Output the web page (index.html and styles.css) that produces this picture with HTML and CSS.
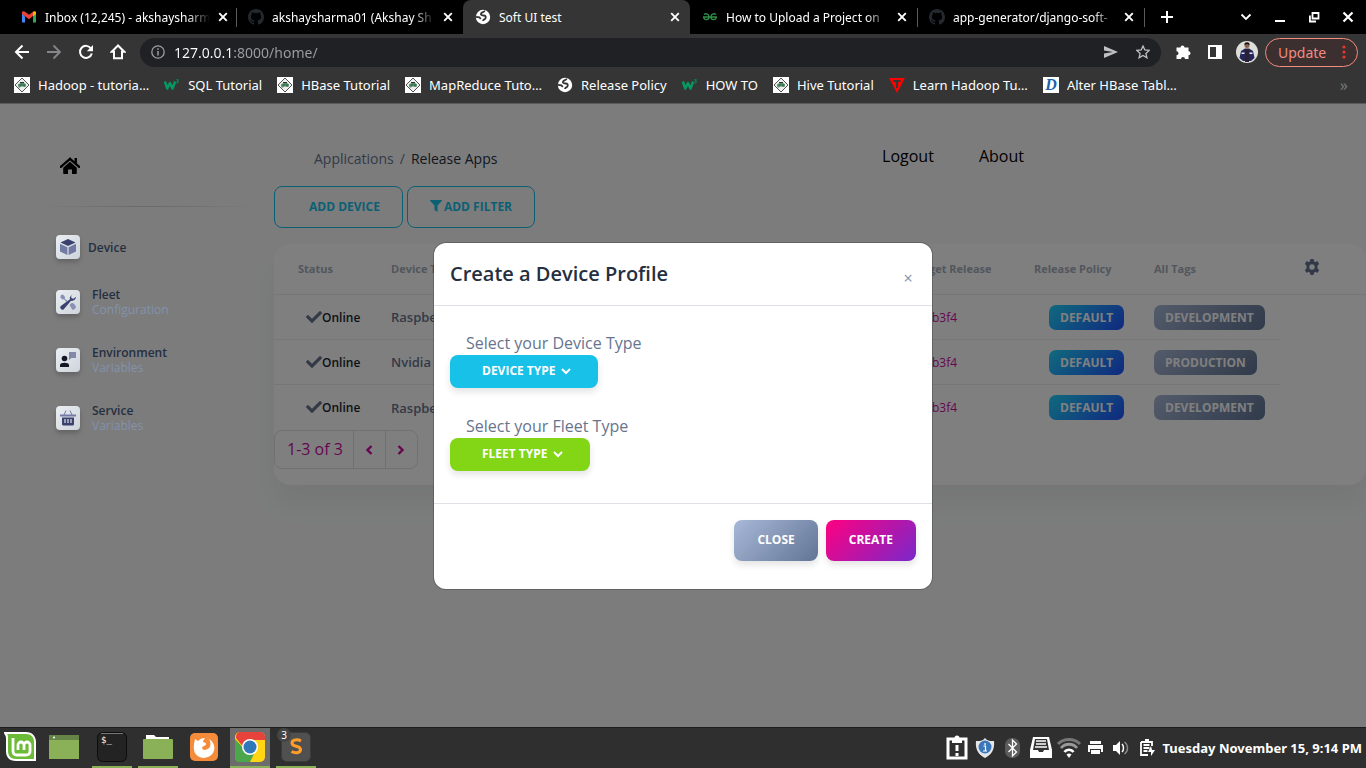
FILE: index.html
```html
<!DOCTYPE html>
<html lang="en">
<head>
<meta charset="utf-8">
<title>Soft UI test</title>
<link rel="stylesheet" href="styles.css">
</head>
<body>
<svg class="defs" aria-hidden="true">
  <symbol id="close" viewBox="0 0 10 10"><path d="M1.2 1.2l7.6 7.6M8.8 1.2L1.2 8.8" fill="none" stroke="#fff" stroke-width="1.9"/></symbol>
  <symbol id="github" viewBox="0 0 16 16"><path fill="#24292f" d="M8 0C3.58 0 0 3.58 0 8c0 3.54 2.29 6.53 5.47 7.59.4.07.55-.17.55-.38v-1.49c-2.01.37-2.53-.49-2.69-.94-.09-.23-.48-.94-.82-1.13-.28-.15-.68-.52-.01-.53.63-.01 1.08.58 1.23.82.72 1.21 1.87.87 2.33.66.07-.52.28-.87.51-1.07-1.78-.2-3.64-.89-3.64-3.95 0-.87.31-1.59.82-2.15-.08-.2-.36-1.02.08-2.12 0 0 .67-.21 2.2.82a7.5 7.5 0 0 1 4 0c1.53-1.04 2.2-.82 2.2-.82.44 1.1.16 1.92.08 2.12.51.56.82 1.27.82 2.15 0 3.07-1.87 3.75-3.65 3.95.29.25.54.73.54 1.48v2.2c0 .21.15.46.55.38A8 8 0 0 0 16 8c0-4.42-3.58-8-8-8z"/></symbol>
  <symbol id="globe" viewBox="0 0 16 16"><circle cx="8" cy="8" r="7.200" fill="#fff"/><path d="M9.500 1.500C10 3.200 6.800 3 6 4.600c-.6 1.400 1 1.900 2.600 1.900 2 0 2.600 1.300 1.900 2.800-.6 1.300-2.400 1-2.500 2.700M1 7.800l3.400.6 1.400 1.600" fill="none" stroke="#353535" stroke-width="1.800"/></symbol>
  <symbol id="elephant" viewBox="0 0 16 16"><path fill="#fff" d="M0 0h16v16H0z"/><path d="M8 1l7 7-7 7-7-7z" fill="#eee" stroke="#555" stroke-width="1"/><path d="M4 7.500c1-1.500 6-2.500 8 0l-.5 2.500H10l-1-.5H7l-1 1H4.500z" fill="#4a8a63"/><path d="M6 5.500h4M6.500 8h1M9.500 8h1" stroke="#333" stroke-width="1"/></symbol>
  <symbol id="w3" viewBox="0 0 16 16"><path d="M.8 4.500l2.500 7L6 6l2.500 5.500 2.700-7" fill="none" stroke="#059862" stroke-width="2.500" stroke-linejoin="round"/><path d="M12.300 2.800h2.200l-1.200 1.500c2 .2 1.500 2.200-1 1.500" fill="none" stroke="#059862" stroke-width=".9"/></symbol>
  <symbol id="check" viewBox="0 0 512 512"><path d="M174 439L7 272a26 26 0 0 1 0-36l37-36a26 26 0 0 1 36 0l112 112L432 73a26 26 0 0 1 36 0l37 36a26 26 0 0 1 0 36L210 439a26 26 0 0 1-36 0z" fill="#67748e"/></symbol>
</svg>

<header class="browser">
  <div class="tabs">
    <div class="tab">
      <svg class="fav" viewBox="0 0 16 16"><path d="M1 4v9.500h3V7.500z" fill="#4285f4"/><path d="M15 4v9.500h-3V7.500z" fill="#34a853"/><path d="M1 3.500C1 2 3 1.800 4 2.700l4 3 4-3V7l-4 3.200L1 5z" fill="#ea4335"/><path d="M12 2.700c1-.9 3-.7 3 .8V5l-3 2.500z" fill="#fbbc04"/></svg>
      <span class="name fade">Inbox (12,245) - akshaysharm</span>
      <button class="x" aria-label="Close tab"><svg><use href="#close"/></svg></button>
    </div>
    <div class="tab line">
      <svg class="fav"><use href="#github"/></svg>
      <span class="name fade">akshaysharma01 (Akshay Sh</span>
      <button class="x" aria-label="Close tab"><svg><use href="#close"/></svg></button>
    </div>
    <div class="tab active">
      <svg class="fav"><use href="#globe"/></svg>
      <span class="name">Soft UI test</span>
      <button class="x" aria-label="Close tab"><svg><use href="#close"/></svg></button>
    </div>
    <div class="tab">
      <svg class="fav" viewBox="0 0 16 16"><path d="M1 8h14M2 5.500c2-1.500 5-.5 5 2.500 0 3.500-5 3.500-5.300 0M14 5.500c-2-1.500-5-.5-5 2.500 0 3.500 5 3.500 5.300 0" fill="none" stroke="#2f8d46" stroke-width="1.400"/></svg>
      <span class="name fade">How to Upload a Project on</span>
      <button class="x" aria-label="Close tab"><svg><use href="#close"/></svg></button>
    </div>
    <div class="tab line">
      <svg class="fav"><use href="#github"/></svg>
      <span class="name fade">app-generator/django-soft-</span>
      <button class="x" aria-label="Close tab"><svg><use href="#close"/></svg></button>
    </div>
    <div class="tabs-end line">
      <button class="plus" aria-label="New tab"><svg viewBox="0 0 12 12"><path d="M6 0v12M0 6h12" stroke="#fff" stroke-width="2"/></svg></button>
      <div class="window-buttons">
        <button aria-label="Search tabs"><svg viewBox="0 0 12 12"><path d="M1.500 3.500L6 8l4.500-4.500" fill="none" stroke="#fff" stroke-width="1.800"/></svg></button>
        <button aria-label="Minimize"><svg viewBox="0 0 12 12"><path d="M1 10h10" stroke="#fff" stroke-width="2"/></svg></button>
        <button aria-label="Restore"><svg viewBox="0 0 12 12"><path d="M4.500 2h6v5.500h-6zM1.900 4.500v6H8" fill="none" stroke="#fff" stroke-width="1.800"/></svg></button>
        <button aria-label="Close window"><svg viewBox="0 0 12 12"><path d="M1.500 1.500l9 9M10.500 1.500l-9 9" stroke="#fff" stroke-width="2.200"/></svg></button>
      </div>
    </div>
  </div>
  <div class="toolbar">
    <button class="tool" aria-label="Back"><svg viewBox="0 0 16 16"><path d="M15 8H2M8.500 1.500L2 8l6.500 6.500" fill="none" stroke="#fff" stroke-width="2"/></svg></button>
    <button class="tool" aria-label="Forward"><svg viewBox="0 0 16 16"><path d="M1 8h13M7.500 1.500L14 8l-6.500 6.500" fill="none" stroke="#85868a" stroke-width="1.800"/></svg></button>
    <button class="tool" aria-label="Reload"><svg viewBox="0 0 16 16"><path d="M13 4.500A6 6 0 1 0 13.800 9.500" fill="none" stroke="#fff" stroke-width="2"/><path d="M15 1v6.200H8.800z" fill="#fff"/></svg></button>
    <button class="tool" aria-label="Home"><svg viewBox="0 0 16 16"><path d="M8 1.500L1.800 7.700H4v6.500h8V7.700h2.200z" fill="none" stroke="#fff" stroke-width="2"/></svg></button>
    <form class="omnibox">
      <svg viewBox="0 0 14 14"><circle cx="7" cy="7" r="6.200" fill="none" stroke="#9aa0a6" stroke-width="1.300"/><path d="M7 6v4.500M7 3.300v1.400" stroke="#9aa0a6" stroke-width="1.500"/></svg>
      <input type="text" aria-label="Address" value="127.0.0.1:8000/home/">
      <svg viewBox="0 0 14 14"><path d="M0 1l14 6-14 6V8.500L9 7 0 5.500z" fill="#bdc1c6"/></svg>
      <svg viewBox="0 0 14 14"><path d="M7 1l1.800 4 4.400.4-3.300 3 1 4.400L7 10.500l-3.900 2.300 1-4.400-3.300-3L5.200 5z" fill="none" stroke="#bdc1c6" stroke-width="1.300"/></svg>
    </form>
    <button class="tool" aria-label="Extensions"><svg viewBox="0 0 16 16"><path d="M1.500 3.500h4a2 2 0 1 1 4 0h4V7.200a2 2 0 1 1 0 4V15H10a2 2 0 0 0-4 0H1.500v-3.800a2 2 0 0 0 0-4z" fill="#fff"/></svg></button>
    <button class="tool" aria-label="Side panel"><svg viewBox="0 0 16 16"><path d="M2 2h12v12H2z" fill="none" stroke="#fff" stroke-width="2"/><path d="M9 2h5v12H9z" fill="#fff"/></svg></button>
    <button class="tool avatar" aria-label="Profile"><svg viewBox="0 0 22 22"><circle cx="11" cy="11" r="11" fill="#dedfd9"/><circle cx="11" cy="4.500" r="2.500" fill="#8a6250"/><path d="M8.300 4a2.700 2.700 0 0 1 5.400 0L11 3z" fill="#111"/><path d="M5 10l4-2.500h4l4 2.500 1.500 7-3.500 3H7l-3.500-3z" fill="#24265a"/><path d="M5.500 11.500h3v1.500h-3zM13.500 11.500h3v1.500h-3z" fill="#dfe4ff"/><path d="M9 8h4v13H9z" fill="#2b1f33"/></svg></button>
    <button class="update"><span>Update</span><svg viewBox="0 0 4 14"><circle cx="2" cy="2" r="1.600"/><circle cx="2" cy="7" r="1.600"/><circle cx="2" cy="12" r="1.600"/></svg></button>
  </div>
  <nav class="bookmarks">
    <a href="#"><svg><use href="#elephant"/></svg>Hadoop - tutoria…</a>
    <a href="#"><svg><use href="#w3"/></svg>SQL Tutorial</a>
    <a href="#"><svg><use href="#elephant"/></svg>HBase Tutorial</a>
    <a href="#"><svg><use href="#elephant"/></svg>MapReduce Tuto…</a>
    <a href="#"><svg><use href="#globe"/></svg>Release Policy</a>
    <a href="#"><svg><use href="#w3"/></svg>HOW TO</a>
    <a href="#"><svg><use href="#elephant"/></svg>Hive Tutorial</a>
    <a href="#"><svg viewBox="0 0 16 16"><path d="M0 1h16L8 16z" fill="#f00"/><path d="M4.500 4h7M8 4v7" stroke="#353535" stroke-width="2"/></svg>Learn Hadoop Tu…</a>
    <a href="#"><span class="d-icon">D</span>Alter HBase Tabl…</a>
    <button class="more" aria-label="More bookmarks">»</button>
  </nav>
</header>

<div class="page">
  <aside class="sidebar">
    <a href="#" class="home" aria-label="Home"><svg viewBox="0 0 20 16"><path d="M10 .8L.8 8.800M10 .8l9.200 8" fill="none" stroke="#000" stroke-width="2.300" stroke-linecap="round"/><path d="M14.500 0h2.500v6l-2.500-2zM10 3.800l6.800 6V15c0 .6-.4 1-1 1H12v-4.500H8V16H4.200c-.6 0-1-.4-1-1V9.800z"/></svg></a>
    <hr>
    <nav class="menu">
      <a href="#" class="single"><span class="box"><svg viewBox="0 0 16 16"><path d="M8 0l7.500 3.500L8 7 .5 3.500z" fill="#3a416f"/><path d="M0 4.800l7.400 3.400V16L0 12.500zM16 4.800L8.600 8.200V16l7.400-3.500z" fill="#727aa3"/></svg></span><span class="text"><b>Device</b></span></a>
      <a href="#"><span class="box"><svg viewBox="0 0 16 16"><path d="M1 1l2-.5L5 3l-.3 1.500L7.500 7 6.500 8 4 5.200l-1.500.3L.3 3.500zM9.500 11l2-2c1-.3 2 .3 2.700 1l1.500 2c.8 2-1.500 4.500-3.500 3.500z" fill="#8a90b4"/><path d="M12.500.3L10 3c-.3 1-.2 1.600 0 2.200L.8 12c-1.800 1.800 1 5 3 3.200L11 6.800c2 .5 5-1 5-4l-2.500 2-2-.5-.3-2z" fill="#3a416f"/></svg></span><span class="text"><b>Fleet</b><small>Configuration</small></span></a>
      <a href="#"><span class="box"><svg viewBox="0 0 16 16"><path d="M9 0h7v6h-4.500L9 8z" fill="#8489ab"/><circle cx="4.500" cy="6.500" r="2.800" fill="#141727"/><path d="M0 15v-2c0-3 9-3 9 0v2z" fill="#141727"/></svg></span><span class="text"><b>Environment</b><small>Variables</small></span></a>
      <a href="#"><span class="box"><svg viewBox="0 0 16 16"><path d="M4 5l2-4.500M12 5l-2-4.500" stroke="#727aa3"/><path d="M0 4.500h16v2H0z" fill="#727aa3"/><path d="M2 7.500h12V14c0 1-1 1.500-1.500 1.500h-9C3 15.500 2 15 2 14z" fill="#3a416f"/><path d="M5 9v4M8 9v4M11 9v4" stroke="#c5c9dc" stroke-width="1.400"/></svg></span><span class="text"><b>Service</b><small>Variables</small></span></a>
    </nav>
  </aside>

  <main class="main">
    <div class="topnav">
      <nav class="crumbs"><a href="#">Applications</a><i>/</i><span>Release Apps</span></nav>
      <nav class="links"><a href="#">Logout</a><a href="#">About</a></nav>
    </div>
    <div class="actions">
      <button class="outline add">ADD DEVICE</button>
      <button class="outline"><svg viewBox="0 0 12 12"><path d="M.5 0h11c.5 0 .6.600.3.900L7.500 5.500V12L4.500 10V5.500L.2.900C-.1.600 0 0 .5 0z" fill="#17c1e8"/></svg>ADD FILTER</button>
    </div>
    <section class="card">
      <table>
        <colgroup><col class="c-status"><col><col class="c-target"><col class="c-policy"><col class="c-tags"><col class="c-gear"></colgroup>
        <thead>
          <tr><th>Status</th><th>Device Type</th><th>Target Release</th><th>Release Policy</th><th>All Tags</th><th><button class="gear" aria-label="Columns"><svg viewBox="0 0 16 16"><path fill-rule="evenodd" d="M6.500 0h3l.5 2.200 1.400.8 2.200-.7 1.500 2.600-1.600 1.600v3l1.600 1.600-1.500 2.600-2.200-.7-1.400.8-.5 2.200h-3L6 13.800l-1.400-.8-2.200.7-1.500-2.600 1.600-1.600v-3L.9 4.900l1.500-2.600 2.200.7L6 2.200zM8 5.300a2.700 2.700 0 1 0 0 5.400 2.700 2.700 0 0 0 0-5.400z" fill="#67748e"/></svg></button></th></tr>
        </thead>
        <tbody>
          <tr><td class="status"><svg><use href="#check"/></svg>Online</td><td class="type">Raspberry Pi</td><td class="hash">b3f4</td><td class="policy"><span class="badge info">DEFAULT</span></td><td><span class="badge">DEVELOPMENT</span></td></tr>
          <tr><td class="status"><svg><use href="#check"/></svg>Online</td><td class="type">Nvidia</td><td class="hash">b3f4</td><td class="policy"><span class="badge info">DEFAULT</span></td><td><span class="badge">PRODUCTION</span></td></tr>
          <tr><td class="status"><svg><use href="#check"/></svg>Online</td><td class="type">Raspberry Pi</td><td class="hash">b3f4</td><td class="policy"><span class="badge info">DEFAULT</span></td><td><span class="badge">DEVELOPMENT</span></td></tr>
        </tbody>
      </table>
      <div class="pager">
        <span>1-3 of 3</span>
        <button aria-label="Previous page"><svg viewBox="0 0 8 10"><path d="M6.500 1l-4 4 4 4" fill="none" stroke="#cb0c9f" stroke-width="2.400"/></svg></button>
        <button aria-label="Next page"><svg viewBox="0 0 8 10"><path d="M1.500 1l4 4-4 4" fill="none" stroke="#cb0c9f" stroke-width="2.400"/></svg></button>
      </div>
    </section>
  </main>

  <div class="backdrop">
    <div class="modal" role="dialog" aria-labelledby="modal-title">
      <div class="modal-head">
        <h5 id="modal-title">Create a Device Profile</h5>
        <button class="dismiss" aria-label="Close">×</button>
      </div>
      <div class="modal-body">
        <div class="field">
          <label for="device">Select your Device Type</label>
          <select id="device" class="pick info-pick"><option>DEVICE TYPE</option></select>
        </div>
        <div class="field">
          <label for="fleet">Select your Fleet Type</label>
          <select id="fleet" class="pick success-pick"><option>FLEET TYPE</option></select>
        </div>
      </div>
      <div class="modal-foot">
        <button class="btn secondary">CLOSE</button>
        <button class="btn primary">CREATE</button>
      </div>
    </div>
  </div>
</div>

<footer class="taskbar">
  <button class="app menu-app" aria-label="Menu"><svg viewBox="0 0 32 30"><path d="M0 0h22c6 0 10 4 10 10v19H12C5 29 2 25 2 19V6C2 3 0 3 0 0z" fill="#fff"/><path d="M3 2h19c5 0 8 3 8 8v17H12c-5 0-8-3-8-8V6c0-2 0-3-1-4z" fill="#6cbb37"/><path d="M9 6v13c0 3 2 4 4 4h9c2 0 4-1 4-4v-6a3 3 0 0 0-6 0v5M20 13a3 3 0 0 0-6 0v5" fill="none" stroke="#fff" stroke-width="2.800"/></svg></button>
  <button class="app desk-app" aria-label="Show desktop"><svg viewBox="0 0 30 30"><path d="M0 3h30v24H0z" fill="#8bb158"/><path d="M0 3h30v5H0z" fill="#668448"/><circle cx="5" cy="5.500" r="1" fill="#fff"/></svg></button>
  <button class="app open" aria-label="Terminal"><svg viewBox="0 0 30 30"><rect x=".5" y=".5" width="29" height="29" rx="5" fill="#232323" stroke="#0c0c0c"/><path d="M4 1.500h22" stroke="#777"/><text x="4" y="11" font-family="DejaVu Sans Mono" font-size="9" fill="#fff">$_</text></svg></button>
  <button class="app open" aria-label="Files"><svg viewBox="0 0 30 30"><path d="M3 6V3h8l2 2h13v4H3z" fill="#fff"/><rect y="7" width="30" height="20" rx="1" fill="#8bb158"/></svg></button>
  <button class="app" aria-label="Firefox"><svg viewBox="0 0 30 30"><rect x="1" y="1" width="28" height="28" rx="5" fill="#f58c3c"/><path fill-rule="evenodd" d="M6 7l3 2c2-2 4-3 7-3l-2 3c0 2 3 1 3 3s-4 2-4 4c1 3 5 2 7 0s2-6 0-9c5 3 7 9 4 14-5 7-15 6-18 0-2-5-1-9 0-14z" fill="#fff"/></svg></button>
  <button class="app open current" aria-label="Chrome"><svg viewBox="0 0 30 30"><rect width="30" height="30" rx="5" fill="#ffd514"/><path d="M0 7v18c0 3 2 5 5 5h10l4-8-9-4z" fill="#4ca64c"/><path d="M5 0h20c3 0 5 2 5 5v3H15L9 16 1 6c0-3 1-6 4-6z" fill="#e5433b"/><circle cx="15" cy="15" r="8" fill="#fff"/><circle cx="15" cy="15" r="6.500" fill="#2f78b9"/></svg></button>
  <button class="app open" aria-label="Sublime Text"><svg viewBox="0 0 30 30"><rect x=".5" y=".5" width="29" height="29" rx="5" fill="#505050" stroke="#3b3b3b"/><path d="M20 9c-3.500-2-9-1.500-9 2 0 4.500 8.500 2 8.500 6.500 0 3.800-5.500 4-9 2" fill="none" stroke="#ff9d27" stroke-width="3"/></svg><span class="count">3</span></button>
  <div class="tray">
    <svg viewBox="0 0 28 28"><path d="M5 5h18v19H5z" fill="none" stroke="#fff" stroke-width="3"/><circle cx="14" cy="4" r="2.500" fill="#fff"/><path d="M9 5h10v4H9zM12.500 11h3v6h-3zM12.500 19h3v3h-3z" fill="#fff"/></svg>
    <svg viewBox="0 0 28 28"><path d="M14 4l2 2c2 1 4 1 7 1 1 9-3 14-9 17C8 21 4 16 5 7c3 0 5 0 7-1z" fill="#e6e6e6"/><circle cx="14" cy="13" r="6.500" fill="#3b78bb"/><path d="M14 9v2M12.500 12h2v5M12 17h4" fill="none" stroke="#fff" stroke-width="1.200"/></svg>
    <svg viewBox="0 0 28 28"><rect x="6" y="4" width="15" height="20" rx="7" fill="#5b5b5b"/><path d="M9.500 10l8 8-4 4V6l4 4-8 8" fill="none" stroke="#fff" stroke-width="1.300"/></svg>
    <svg viewBox="0 0 28 28"><path d="M6 3h16l3 13v8H3v-8z" fill="#fff"/><path d="M8 5h12l2 11h-5l-1 2h-4l-1-2H6z" fill="#343434"/><path d="M9 7h10M9 10h10M8 13h12" stroke="#fff" stroke-width="1.500"/></svg>
    <svg viewBox="0 0 28 28"><path d="M3 10c6-6 16-6 22 0" fill="none" stroke="#777" stroke-width="3"/><path d="M6 14c4-5 12-5 16 0" fill="none" stroke="#999" stroke-width="2.800"/><path d="M9.500 18c2-3 7-3 9 0" fill="none" stroke="#fff" stroke-width="2.600"/><path d="M11.500 20.500a4 4 0 0 1 5 0L14 24z" fill="#fff"/></svg>
    <svg class="slim" viewBox="0 0 25 28"><path d="M7 7h11v3H7zM5 11h15v7h-2v-3H7v3H5zM8 16h9v4H8z" fill="#fff"/></svg>
    <svg class="slim" viewBox="0 0 25 28"><path d="M5 11h3l4-4v14l-4-4H5z" fill="#fff"/><path d="M14 10c2 2 2 6 0 8" fill="none" stroke="#fff" stroke-width="1.500"/><path d="M16.500 8c4 3 4 9 0 12" fill="none" stroke="#888" stroke-width="1.500"/></svg>
    <svg viewBox="0 0 28 28"><path d="M12 6h4M8 8h11v4M8 8v13h7M10.500 11h6M10.500 14h6M10.500 17h4" fill="none" stroke="#fff" stroke-width="1.800"/><path d="M18 12l-3 6h3v4l4-6h-3z" fill="#fff"/></svg>
    <time>Tuesday November 15, 9:14 PM</time>
  </div>
</footer>
</body>
</html>
```
FILE: styles.css
```css
* { box-sizing: border-box; }
body {
  margin: 0;
  height: 100vh;
  display: flex;
  flex-direction: column;
  overflow: hidden;
  font-family: "Open Sans", sans-serif;
  background: #f8f9fa;
}
svg { display: block; flex: none; }
a { color: inherit; text-decoration: none; }
button { border: 0; padding: 0; background: none; font: inherit; color: inherit; }
.defs { position: absolute; width: 0; height: 0; }

/* Browser frame */
.browser, .taskbar { font-family: "Noto Sans", sans-serif; font-size: 13px; color: #fff; flex: none; }
.browser { background: #353535; border-bottom: 1px solid #5a5a5a; }
.tabs { display: flex; height: 34px; background: #000; padding-left: 9px; }
.tab { flex: 0 1 227px; min-width: 0; display: flex; align-items: center; gap: 8px; padding: 0 10px 0 12px; }
.tab.active { background: #353535; border-radius: 8px 8px 0 0; }
.line { background: linear-gradient(#5a5a5a, #5a5a5a) left 8px / 1px 19px no-repeat; }
.fav { width: 16px; height: 16px; }
.name { flex: 1; font-size: 12px; white-space: nowrap; }
.fade {
  -webkit-mask-image: linear-gradient(90deg, #000 86%, transparent);
  mask-image: linear-gradient(90deg, #000 86%, transparent);
}
.x svg { width: 10px; height: 10px; }
.tabs-end { flex: 1; display: flex; align-items: center; justify-content: space-between; padding: 0 12px 0 17px; }
.tabs-end svg { width: 12px; height: 12px; }
.window-buttons { display: flex; gap: 22px; }
.toolbar { display: flex; align-items: center; height: 36px; padding: 0 8px 0 6px; }
.tool { width: 32px; display: flex; justify-content: center; }
.tool svg { width: 16px; height: 16px; }
.tool.avatar svg { width: 22px; height: 22px; }
.omnibox {
  flex: 1;
  display: flex;
  align-items: center;
  gap: 18px;
  height: 29px;
  margin: 0 6px;
  padding: 0 11px;
  border-radius: 15px;
  background: #202124;
}
.omnibox svg { width: 14px; height: 14px; }
.omnibox input {
  flex: 1;
  min-width: 0;
  margin-left: -9px;
  padding: 0;
  border: 0;
  outline: 0;
  font: 14px "Noto Sans", sans-serif;
  color: transparent;
  background: linear-gradient(90deg, #fff 58px, #9aa0a6 58px);
  -webkit-background-clip: text;
  background-clip: text;
}
.update {
  display: flex;
  align-items: center;
  justify-content: space-between;
  width: 93px;
  height: 29px;
  margin-left: 2px;
  padding: 0 11px 0 12px;
  border: 1px solid #f28b82;
  border-radius: 15px;
  background: #3b2f2f;
  color: #f28b82;
  font-size: 14px;
}
.update svg { width: 4px; height: 14px; fill: #e8372c; }
.bookmarks { display: flex; align-items: center; gap: 15px; height: 33px; padding: 0 18px 3px 14px; white-space: nowrap; }
.bookmarks a { display: flex; align-items: center; gap: 8px; }
.bookmarks svg, .d-icon { width: 16px; height: 16px; }
.d-icon { background: #fff; color: #1b62ab; font: italic bold 16px/16px "Liberation Serif", serif; text-align: center; }
.more { margin-left: auto; color: #777; font-size: 16px; }

/* Application */
.page { position: relative; flex: 1; min-height: 0; display: flex; background: #f8f9fa; color: #67748e; }
.sidebar { position: relative; z-index: 2; width: 274px; padding: 53px 14px 0 35px; }
.home { display: block; width: 20px; margin-left: 25px; }
.home svg { width: 20px; height: 18px; }
.sidebar hr { height: 1px; margin: 31px 0 28px; border: 0; background: linear-gradient(90deg, transparent, #686a6a, transparent); }
.menu { display: flex; flex-direction: column; gap: 28px; padding-left: 21px; }
.menu a { display: flex; align-items: center; gap: 12px; height: 30px; }
.menu .single { gap: 8px; height: 24px; }
.box {
  width: 24px;
  height: 24px;
  display: grid;
  place-items: center;
  border-radius: 4px;
  background: linear-gradient(135deg, #ebeff4, #ced4da);
  box-shadow: 0 3px 5px rgba(0, 0, 0, .2);
}
.box svg { width: 16px; height: 16px; }
.text { display: flex; flex-direction: column; font-size: 12px; line-height: 15px; color: #252f40; }
.text b { font-weight: 600; }
.text small { font-size: 12px; color: #8392ab; }
.main { flex: 1; min-width: 0; }
.topnav { display: grid; grid-template-columns: 54% 1fr; height: 82px; padding: 40px 0 0 40px; line-height: 24px; }
.crumbs { display: flex; gap: 6px; padding-top: 3px; font-size: 14px; }
.crumbs i { font-style: normal; }
.crumbs span { color: #252f40; }
.links { display: flex; gap: 45px; font-size: 16px; color: #000; }
.actions { display: flex; gap: 4px; margin-bottom: 16px; }
.outline {
  display: flex;
  align-items: center;
  justify-content: center;
  gap: 2px;
  width: 128px;
  height: 42px;
  padding-bottom: 2px;
  border: 1px solid #17c1e8;
  border-radius: 8px;
  color: #17c1e8;
  font-size: 12px;
  font-weight: 700;
}
.outline.add { width: 129px; padding-left: 12px; }
.outline svg { width: 12px; height: 12px; }
.card { padding-bottom: 16px; border-radius: 16px; background: #fff; box-shadow: 0 20px 27px rgba(0, 0, 0, .05); }
table { width: 100%; table-layout: fixed; border-collapse: separate; border-spacing: 0; }
.c-status { width: 93px; }
.c-target { width: 123px; }
.c-policy { width: 120px; }
.c-tags { width: 150px; }
.c-gear { width: 86px; }
th, td { padding: 0 0 0 24px; text-align: left; white-space: nowrap; border-bottom: 1px solid #e9ecef; }
th { height: 51px; padding-bottom: 2px; font-size: 11px; font-weight: 700; color: #a5adba; }
td { height: 45px; font-size: 14px; }
tbody tr:last-child td { border-bottom: 0; }
.gear svg { width: 16px; height: 16px; }
.status { padding-left: 32px; color: #1a1f2e; font-size: 12px; font-weight: 600; }
.status svg { display: inline-block; width: 16px; height: 16px; vertical-align: -3px; }
.type { font-weight: 600; font-size: 13px; }
.hash { padding-left: 45px; color: #cb0c9f; font-size: 12px; }
.policy { padding-left: 39px; }
.badge {
  display: inline-block;
  padding: 0 11px;
  border-radius: 7px;
  background: linear-gradient(135deg, #a8b8d8, #627594);
  color: #fff;
  font-size: 12px;
  line-height: 25px;
  font-weight: 700;
}
.badge.info { background: linear-gradient(135deg, #21d4fd, #2152ff); }
.pager { display: inline-flex; height: 39px; border: 1px solid #dee2e6; border-radius: 8px; color: #cb0c9f; font-size: 16px; line-height: 37px; vertical-align: top; }
.pager span { padding: 0 10px 0 12px; }
.pager button { width: 32px; display: grid; place-items: center; border-left: 1px solid #dee2e6; }
.pager svg { width: 8px; height: 10px; }

/* Dialog */
.backdrop { position: absolute; inset: 0; display: grid; place-items: center; z-index: 1; background: rgba(0, 0, 0, .5); }
.modal { width: 498px; border-radius: 12px; background: #fff; box-shadow: 0 0 0 1px rgba(0, 0, 0, .2); }
.modal-head { display: flex; justify-content: space-between; height: 63px; padding: 16px; border-bottom: 1px solid #dee2e6; }
.modal-head h5 { margin: 0; font-size: 20px; line-height: 30px; font-weight: 600; color: #252f40; }
.dismiss { width: 16px; font-size: 16px; line-height: 38px; color: #8392ab; }
.modal-body { display: grid; gap: 26px; padding: 25px 16px 32px; }
.field { display: flex; flex-direction: column; align-items: flex-start; }
.field label { padding-left: 16px; font-size: 16px; line-height: 24px; }
.pick {
  appearance: none;
  height: 33px;
  padding: 0 42px 2px 32px;
  border: 0;
  border-radius: 8px;
  color: #fff;
  font: 700 12px "Open Sans", sans-serif;
  box-shadow: 0 4px 7px rgba(0, 0, 0, .11);
  background: url("data:image/svg+xml,%3Csvg xmlns='http://www.w3.org/2000/svg' width='10' height='8' viewBox='0 0 10 8'%3E%3Cpath d='M1 2L5 6 9 2' fill='none' stroke='white' stroke-width='2'/%3E%3C/svg%3E") right 27px center no-repeat;
}
.info-pick { background-color: #17c1e8; }
.success-pick { background-color: #82d616; }
.modal-foot { display: flex; justify-content: flex-end; gap: 8px; padding: 16px 16px 28px; border-top: 1px solid #dee2e6; }
.btn { height: 41px; padding: 0 23px 2px; border-radius: 8px; color: #fff; font-size: 12px; font-weight: 700; box-shadow: 0 4px 7px rgba(0, 0, 0, .11); }
.secondary { background: linear-gradient(135deg, #a8b8d8, #627594); }
.primary { background: linear-gradient(135deg, #ff0080, #7928ca); }

/* Desktop panel */
.taskbar { display: flex; height: 41px; border-top: 1px solid #1d1d1d; background: #2f2f2f; }
.app { position: relative; width: 40px; margin-right: 6px; display: grid; place-items: center; border-bottom: 2px solid transparent; }
.app svg { width: 30px; height: 30px; }
.menu-app { margin-right: 4px; }
.menu-app svg { width: 32px; }
.desk-app { margin-right: 8px; }
.app.open { border-bottom-color: #8bb158; }
.app.current { background: #6c6c6c; }
.count { position: absolute; left: 1px; top: 0; width: 14px; border-radius: 7px; background: #454545; font-size: 10px; line-height: 14px; text-align: center; }
.tray { margin-left: auto; display: flex; align-items: center; padding-right: 4px; }
.tray svg { width: 28px; height: 28px; }
.tray svg.slim { width: 25px; }
.tray time { padding-left: 2px; font-weight: 700; font-size: 13px; }
```
